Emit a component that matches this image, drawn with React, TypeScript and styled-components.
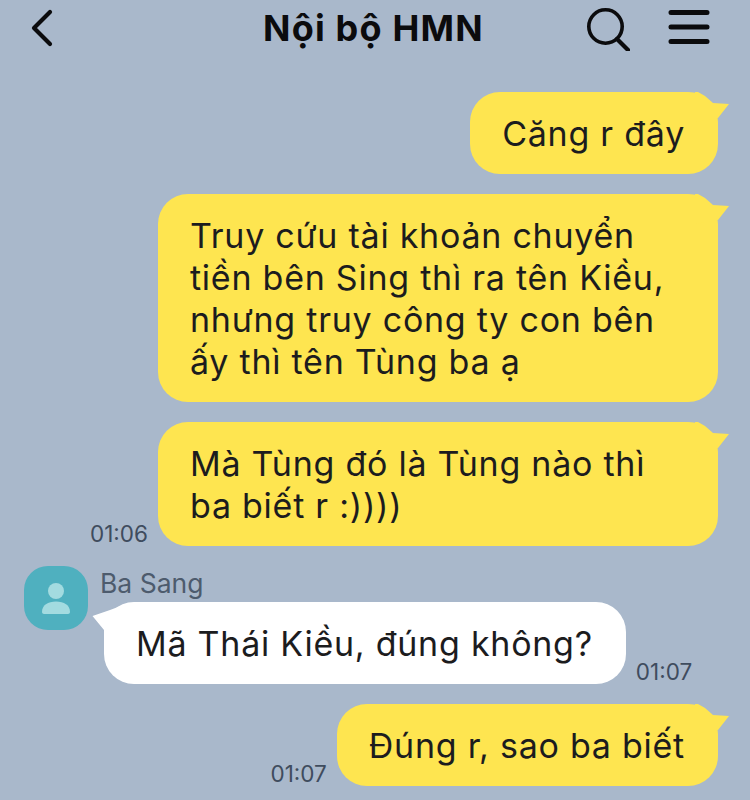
import React from "react";
import styled, { createGlobalStyle } from "styled-components";

const GlobalStyle = createGlobalStyle`
  html, body {
    margin: 0;
    padding: 0;
    background: #a9b8cb;
  }
  * {
    box-sizing: border-box;
  }
`;

const Screen = styled.div`
  width: 750px;
  height: 800px;
  overflow: hidden;
  background: #a9b8cb;
  font-family: Inter, "Noto Sans", sans-serif;
  color: #1c1c1e;
`;

const Header = styled.header`
  display: flex;
  align-items: center;
  height: 56px;
  margin-bottom: 36px;
  padding: 0 40px 0 30px;
`;

const Title = styled.h1`
  margin: 0 0 0 209px;
  font-size: 36px;
  line-height: 56px;
  font-weight: 700;
  letter-spacing: 1.2px;
  white-space: nowrap;
  color: #0b0b0d;
`;

const HeaderActions = styled.div`
  display: flex;
  align-items: center;
  gap: 38px;
  margin-left: auto;
`;

const Messages = styled.div`
  display: flex;
  flex-direction: column;
  gap: 20px;
`;

const OutRow = styled.div`
  display: flex;
  justify-content: flex-end;
  align-items: flex-end;
  gap: 10px;
  padding-right: 32px;
`;

const InRow = styled.div`
  display: flex;
  align-items: flex-start;
  gap: 13px;
  padding-left: 24px;
`;

const Avatar = styled.div`
  display: flex;
  align-items: center;
  justify-content: center;
  width: 64px;
  height: 64px;
  flex: none;
  border-radius: 24px;
  background: #4fb0bf;
`;

const InBody = styled.div`
  display: flex;
  flex-direction: column;
`;

const SenderName = styled.div`
  height: 36px;
  margin-left: -1px;
  font-size: 26.5px;
  line-height: 34px;
  color: #4d5b6d;
`;

const InLine = styled.div`
  display: flex;
  align-items: flex-end;
  gap: 10px;
  margin-left: 3px;
`;

const Bubble = styled.div<{ $incoming?: boolean }>`
  position: relative;
  max-width: 560px;
  padding: 21px 33px 19px 32px;
  border-radius: 30px;
  font-size: 34px;
  line-height: 42px;
  letter-spacing: 0.75px;
  background: ${(p) => (p.$incoming ? "#ffffff" : "#fee550")};

  &::after {
    content: "";
    position: absolute;
    top: ${(p) => (p.$incoming ? "2px" : "0")};
    ${(p) => (p.$incoming ? "left: -12px;" : "right: -11px;")}
    width: 34px;
    height: 30px;
    background: inherit;
    clip-path: ${(p) =>
      p.$incoming
        ? "polygon(0.5px 12px, 18px 6px, 34px 0, 34px 30px, 12px 30px, 12px 26px)"
        : "polygon(0 0, 3px 0, 10px 4px, 18px 11px, 34px 12px, 23px 26px, 0 30px)"};
  }
`;

const Time = styled.span`
  font-size: 22.5px;
  line-height: 24px;
  color: #3f4c5e;
  flex: none;
`;

export default function App() {
  return (
    <Screen>
      <GlobalStyle />
      <Header>
        <svg width="24" height="38" viewBox="0 0 24 38" fill="none">
          <path d="M20 3 L4 19 L20 35" stroke="#0b0b0d" strokeWidth="4.2" strokeLinecap="round" strokeLinejoin="round" />
        </svg>
        <Title>Nội bộ HMN</Title>
        <HeaderActions>
          <svg width="46" height="46" viewBox="0 0 46 46" fill="none">
            <circle cx="21.500" cy="21.500" r="16.700" stroke="#0b0b0d" strokeWidth="3.6" />
            <path d="M33 34 L44 45" stroke="#0b0b0d" strokeWidth="4.2" strokeLinecap="round" />
          </svg>
          <svg width="42" height="36" viewBox="0 0 42 36" fill="none">
            <path d="M3 2.500 H39 M3 17 H39 M3 31.500 H39" stroke="#0b0b0d" strokeWidth="5" strokeLinecap="round" />
          </svg>
        </HeaderActions>
      </Header>
      <Messages>
        <OutRow>
          <Bubble>Căng r đây</Bubble>
        </OutRow>
        <OutRow>
          <Bubble>Truy cứu tài khoản chuyển tiền bên Sing thì ra tên Kiều, nhưng truy công ty con bên ấy thì tên Tùng ba ạ</Bubble>
        </OutRow>
        <OutRow>
          <Time>01:06</Time>
          <Bubble>Mà Tùng đó là Tùng nào thì ba biết r :))))</Bubble>
        </OutRow>
        <InRow>
          <Avatar>
            <svg width="30" height="32" viewBox="0 0 30 32" fill="#a3dbe0">
              <circle cx="15" cy="9" r="8" />
              <path d="M1 30 C1 23 7 19.500 15 19.500 C23 19.500 29 23 29 30 C29 31 28 32 27 32 H3 C2 32 1 31 1 30 Z" />
            </svg>
          </Avatar>
          <InBody>
            <SenderName>Ba Sang</SenderName>
            <InLine>
              <Bubble $incoming>Mã Thái Kiều, đúng không?</Bubble>
              <Time>01:07</Time>
            </InLine>
          </InBody>
        </InRow>
        <OutRow>
          <Time>01:07</Time>
          <Bubble>Đúng r, sao ba biết</Bubble>
        </OutRow>
      </Messages>
    </Screen>
  );
}
